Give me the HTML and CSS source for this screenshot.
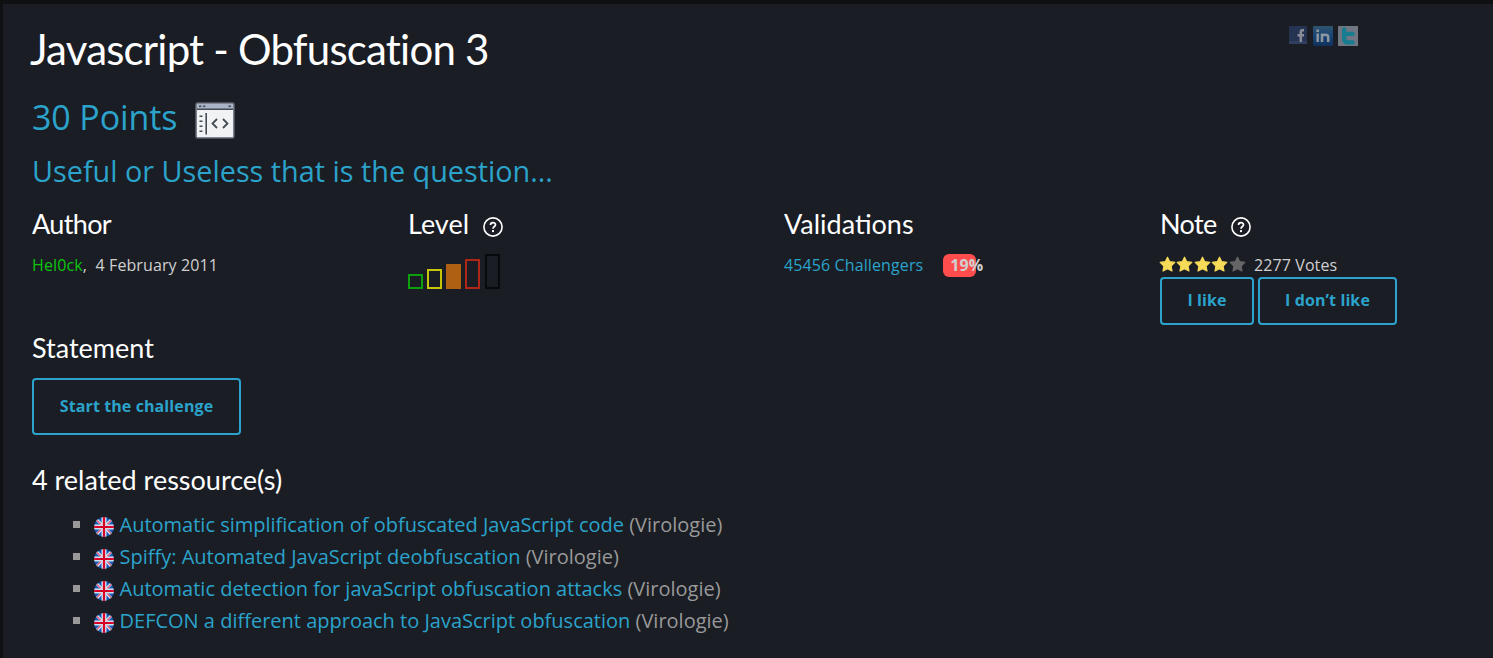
FILE: index.html
```html
<!DOCTYPE html>
<html lang="en">
<head>
<meta charset="utf-8">
<title>Javascript - Obfuscation 3</title>
<link rel="stylesheet" href="styles.css">
</head>
<body>
<svg class="defs" width="0" height="0" aria-hidden="true">
  <symbol id="uk" viewBox="0 0 20 20">
    <clipPath id="disc"><circle cx="10" cy="10" r="10"/></clipPath>
    <g clip-path="url(#disc)">
      <rect width="20" height="20" fill="#1459b3"/>
      <path d="M1 1 19 19M19 1 1 19" stroke="#d9e2f0" stroke-width="2.8"/>
      <path d="M1 1.6 10 10.6M19 1.6 10 10.6M10 9.4 1 18.4M10 9.4 19 18.4" stroke="#e34a68" stroke-width="1.1"/>
      <path d="M10 0V20M0 10H20" stroke="#d5dcea" stroke-width="5"/>
      <path d="M10 0V20M0 10H20" stroke="#d80027" stroke-width="2.2"/>
    </g>
  </symbol>
  <symbol id="star" viewBox="0 0 17 17">
    <path d="M8.5 1.2 10.7 5.7 15.8 6.4 12.1 10 13 15 8.5 12.7 4 15 4.9 10 1.2 6.4 6.3 5.7Z" fill="currentColor" stroke="currentColor" stroke-width="1.2" stroke-linejoin="round"/>
  </symbol>
  <symbol id="help" viewBox="0 0 20 20">
    <circle cx="10" cy="10" r="9.1" fill="none" stroke="#fff" stroke-width="1.6"/>
    <path d="M7.5 8C7.5 4.9 12.5 4.9 12.5 7.8C12.5 9.5 10 9.6 10 11.8" fill="none" stroke="#fff" stroke-width="1.7"/>
    <rect x="9" y="13.1" width="2" height="2" fill="#fff"/>
  </symbol>
</svg>
<main class="card">
  <header class="top">
    <h1 class="title">Javascript - Obfuscation 3</h1>
    <div class="share">
      <svg width="18" height="18" viewBox="0 0 18 18"><rect width="18" height="18" fill="#263454"/><rect y="15" width="18" height="3" fill="#303f60"/><path d="M15 4.2H13.3Q11.8 4.2 11.8 6V16M8.5 9.2H15" fill="none" stroke="#8a8d95" stroke-width="2.5"/></svg>
      <svg width="20" height="20" viewBox="0 0 20 20"><defs><linearGradient id="li" x1="0" x2="0" y1="0" y2="1"><stop offset="0" stop-color="#31546f"/><stop offset=".5" stop-color="#174575"/><stop offset="1" stop-color="#12305a"/></linearGradient></defs><rect width="20" height="20" rx="1" fill="url(#li)"/><path d="M4.7 7.6V16M9 16V7.6M9 11Q9 8.8 12 8.8Q15.2 8.8 15.2 11V16" fill="none" stroke="#8d969f" stroke-width="2.5"/><rect x="3.4" y="3.5" width="2.6" height="2.5" fill="#8d969f"/></svg>
      <svg width="20" height="20" viewBox="0 0 20 20"><rect width="20" height="20" fill="#707782"/><path d="M6.2 3.5V12.5Q6.2 16.4 10 16.4H14.5M6.2 7.9H14.5" fill="none" stroke="#187c91" stroke-width="4.4" stroke-linecap="round"/></svg>
    </div>
  </header>
  <div class="points">
    <span class="points-text">30 Points</span>
    <svg width="40" height="37" viewBox="0 0 40 37"><rect x="1" y="1" width="38" height="35" rx="1.5" fill="#f0f2f3" stroke="#5d626f" stroke-width="1.6"/><path d="M2 2H38V7H2Z" fill="#a9b3c7"/><path d="M2 7.3H38" stroke="#454b57" stroke-width="1.4"/><path d="M4 4.3H6.3M8 4.3H10.3M33.5 4.3H36" stroke="#454b57" stroke-width="1.5"/><path d="M4.5 14.2H7.5M4.5 19.2H7.5M4.5 24.2H7.5M4.5 29.2H7.5M11.2 11V32.5" stroke="#454b57" stroke-width="1.6"/><path d="M22 17 17.5 21.5 22 26M28 17 32.5 21.5 28 26" fill="none" stroke="#454b57" stroke-width="1.8"/></svg>
  </div>
  <p class="tagline">Useful or Useless that is the question...</p>
  <section class="stats">
    <div>
      <h2 class="head author">Author</h2>
      <div class="line"><span class="user">Hel0ck</span>,&nbsp; 4 February 2011</div>
    </div>
    <div>
      <h2 class="head level">Level <svg class="help"><use href="#help"/></svg></h2>
      <div class="bars"><i class="bar b1"></i><i class="bar b2"></i><i class="bar b3"></i><i class="bar b4"></i><i class="bar b5"></i></div>
    </div>
    <div>
      <h2 class="head valid">Validations</h2>
      <div class="line valrow"><span class="blue">45456 Challengers</span><span class="rate">19%</span></div>
    </div>
    <div>
      <h2 class="head note">Note <svg class="help"><use href="#help"/></svg></h2>
      <div class="votes"><span class="stars"><svg><use href="#star"/></svg><svg><use href="#star"/></svg><svg><use href="#star"/></svg><svg><use href="#star"/></svg><svg class="off"><use href="#star"/></svg></span>2277 Votes</div>
      <div class="buttons"><a class="btn like">I like</a><a class="btn dislike">I don’t like</a></div>
    </div>
  </section>
  <h2 class="head statement">Statement</h2>
  <a class="btn start">Start the challenge</a>
  <h2 class="head related">4 related ressource(s)</h2>
  <ul class="list">
    <li><svg><use href="#uk"/></svg><span><span class="blue">Automatic simplification of obfuscated JavaScript code</span> (Virologie)</span></li>
    <li><svg><use href="#uk"/></svg><span><span class="blue">Spiffy: Automated JavaScript deobfuscation</span> (Virologie)</span></li>
    <li><svg><use href="#uk"/></svg><span><span class="blue">Automatic detection for javaScript obfuscation attacks</span> (Virologie)</span></li>
    <li><svg><use href="#uk"/></svg><span><span class="blue">DEFCON a different approach to JavaScript obfuscation</span> (Virologie)</span></li>
  </ul>
</main>
</body>
</html>
```
FILE: styles.css
```css
* { box-sizing: border-box; }
body { margin: 0; background: #0e1012; font-family: "Open Sans", "Noto Sans", sans-serif; font-size: 16px; color: #d0d0d0; }
h1, h2, p, ul { margin: 0; padding: 0; font-weight: 400; }
svg { display: block; flex: none; }
.defs { position: absolute; }
.card { margin: 4px 0 0 3px; height: 654px; padding: 0 29px; background: #1a1d24; overflow: hidden; white-space: nowrap; }
.top { display: flex; justify-content: space-between; height: 91px; padding-top: 18px; }
.title { font-family: Lato, sans-serif; font-size: 42px; line-height: 54px; letter-spacing: -.8px; color: #fff; margin-left: -2px; }
.share { display: flex; gap: 6px; padding: 4px 106px 0 0; }
.share svg + svg + svg { margin-left: -1px; }
.points { display: flex; height: 48px; color: #2ba3cb; font-size: 34px; line-height: 44px; letter-spacing: -.12px; }
.points svg { margin: 7px 0 0 18px; }
.tagline { font-size: 28.8px; line-height: 40px; margin-top: 8px; color: #2ba3cb; }
.stats { display: grid; grid-template-columns: repeat(3, 376px) 1fr; height: 137px; padding-top: 13px; }
.head { display: flex; font-family: Lato, sans-serif; font-size: 27px; line-height: 40px; height: 40px; color: #fff; }
.author { letter-spacing: -.65px; }
.note { letter-spacing: -.6px; }
.help { width: 20px; height: 20px; margin: 13px 0 0 14px; }
.line { line-height: 24px; margin-top: 9px; letter-spacing: .11px; }
.user { color: #0cc40c; }
.blue { color: #2ba3cb; }
.bars { display: flex; align-items: flex-end; gap: 4px; height: 35px; margin-top: 10px; }
.bar { width: 15px; border: 2px solid; }
.b1 { height: 15px; color: #0ca00c; }
.b2 { height: 20px; color: #c6c60a; }
.b3 { height: 25px; color: #b06012; background: #b06012; }
.b4 { height: 30px; color: #ae2616; }
.b5 { height: 35px; color: #08090b; margin-left: 1px; }
.valrow { display: flex; }
.rate { width: 33px; height: 23px; margin: 1px 0 0 20px; line-height: 22px; padding-left: 7px; border-radius: 6px; background: #ff4d4d; font-weight: 700; }
.votes { display: flex; line-height: 24px; margin-top: 9px; letter-spacing: .1px; }
.stars { display: flex; width: 87px; margin: 3px 8px 0 -1px; gap: .4px; color: #f7db59; }
.stars svg { width: 17px; height: 17px; }
.stars .off { color: #666; }
.buttons { display: flex; gap: 4px; }
.btn { display: block; border: 2px solid #2ba3cb; border-radius: 4px; color: #2ba3cb; font-weight: 700; text-align: center; letter-spacing: .1px; }
.like, .dislike { height: 48px; line-height: 43px; }
.like { width: 94px; }
.dislike { width: 139px; }
.start { width: 209px; height: 57px; line-height: 53px; margin-top: 10px; }
.related { margin-top: 25px; }
.list { list-style: none; margin: 9px 0 0 41px; font-size: 20px; line-height: 32px; color: #999; }
.list li { display: flex; height: 32px; }
.list li::before { content: ""; width: 7px; height: 7px; margin: 12px 14px 0 0; background: #999; }
.list svg { width: 20px; height: 20px; margin: 8px 5.5px 0 0; }
```
